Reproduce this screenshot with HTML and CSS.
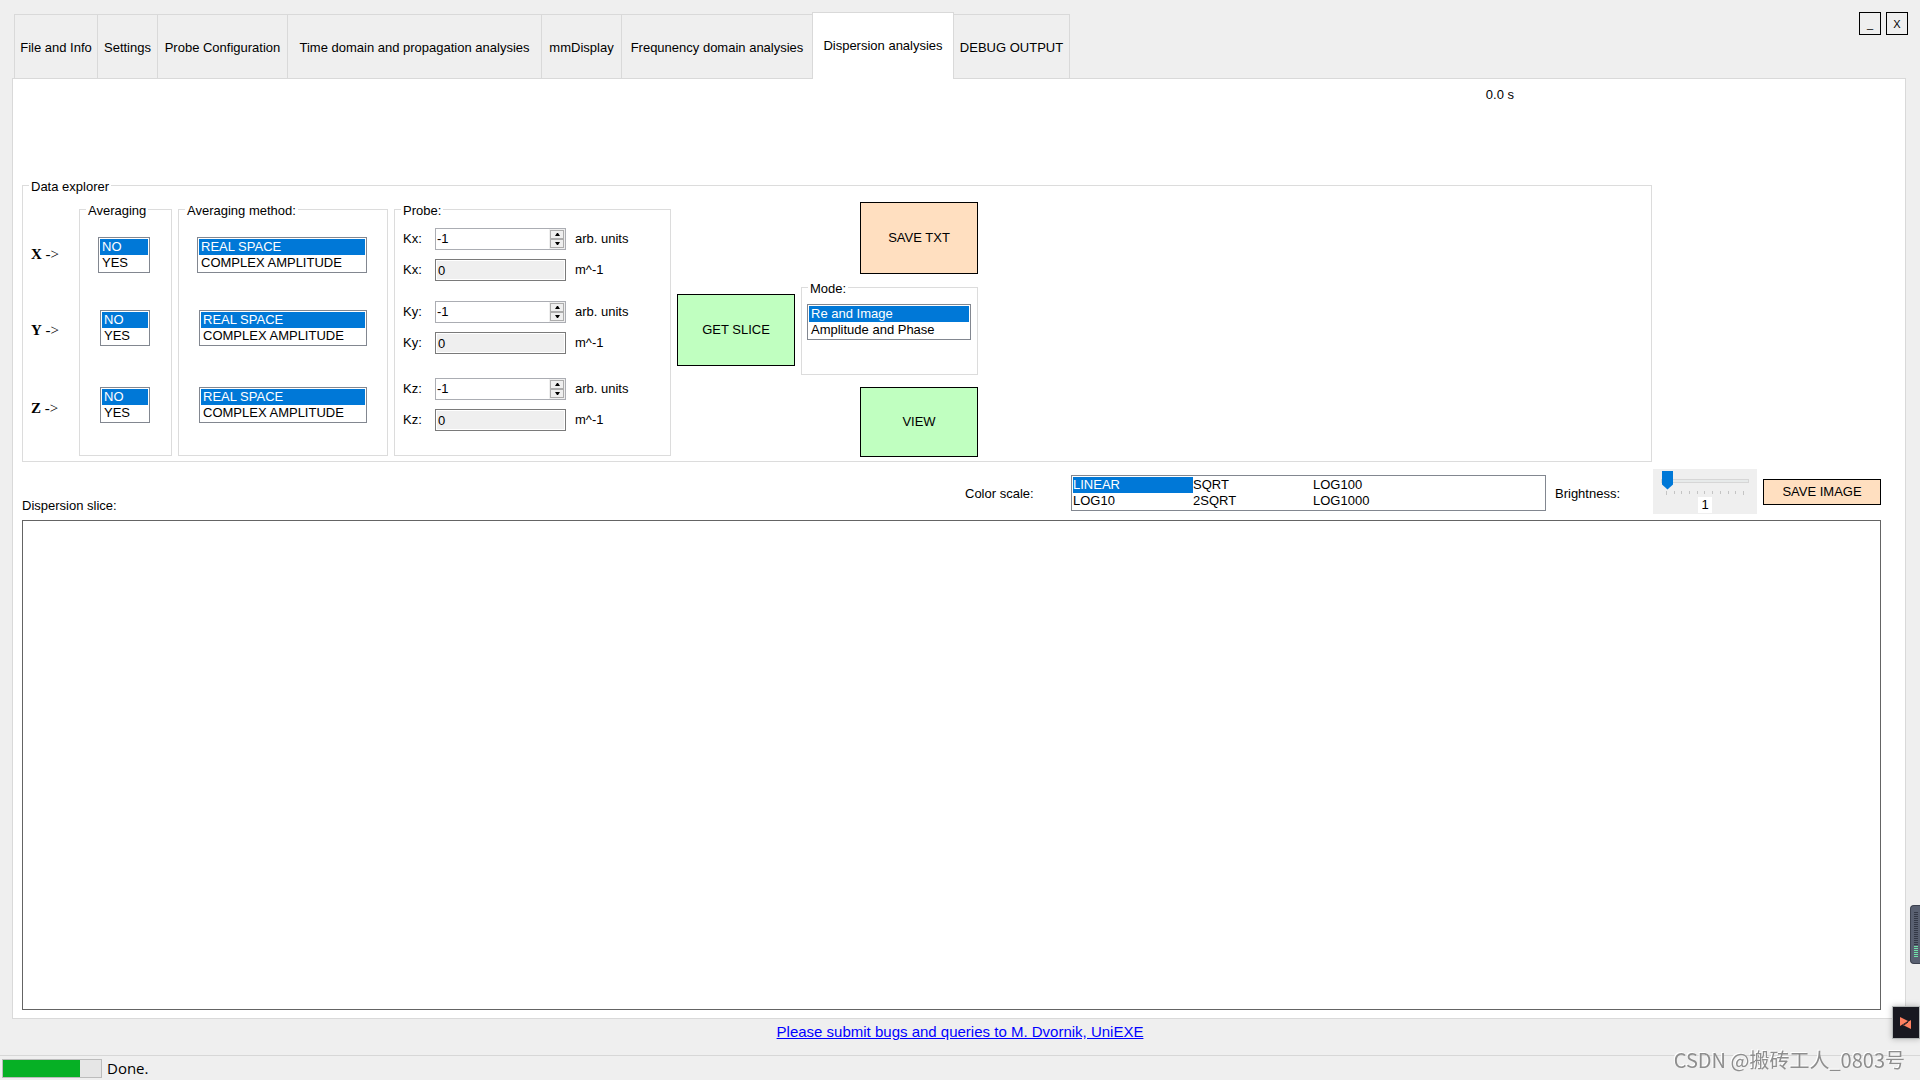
FILE: index.html
```html
<!DOCTYPE html>
<html lang="en">
<head>
<meta charset="utf-8">
<title>Dispersion analysies</title>
<link rel="stylesheet" href="styles.css">
</head>
<body>
<header class="topbar">
  <div class="tabs" role="tablist">
    <button class="tab" role="tab">File and Info</button>
    <button class="tab" role="tab">Settings</button>
    <button class="tab" role="tab">Probe Configuration</button>
    <button class="tab" role="tab">Time domain and propagation analysies</button>
    <button class="tab" role="tab">mmDisplay</button>
    <button class="tab" role="tab">Frequnency domain analysies</button>
    <button class="tab tab-active" role="tab" aria-selected="true">Dispersion analysies</button>
    <button class="tab tab-last" role="tab">DEBUG OUTPUT</button>
  </div>
  <div class="window-buttons">
    <button class="window-button">_</button>
    <button class="window-button">X</button>
  </div>
</header>

<main class="panel">
  <div class="timer">0.0 s</div>

  <fieldset class="group explorer">
    <legend>Data explorer</legend>
    <div class="explorer-row">
      <div class="axes rows">
        <div class="cell"><b>X</b>&nbsp;-&gt;</div>
        <div class="cell"><b>Y</b>&nbsp;-&gt;</div>
        <div class="cell"><b>Z</b>&nbsp;-&gt;</div>
      </div>

      <fieldset class="group averaging">
        <legend>Averaging</legend>
        <div class="rows">
          <div class="cell"><select class="list list-wide" size="2" aria-label="X averaging"><option selected>NO</option><option>YES</option></select></div>
          <div class="cell"><select class="list" size="2" aria-label="Y averaging"><option selected>NO</option><option>YES</option></select></div>
          <div class="cell"><select class="list" size="2" aria-label="Z averaging"><option selected>NO</option><option>YES</option></select></div>
        </div>
      </fieldset>

      <fieldset class="group method">
        <legend>Averaging method:</legend>
        <div class="rows">
          <div class="cell"><select class="list list-wide" size="2" aria-label="X averaging method"><option selected>REAL SPACE</option><option>COMPLEX AMPLITUDE</option></select></div>
          <div class="cell"><select class="list" size="2" aria-label="Y averaging method"><option selected>REAL SPACE</option><option>COMPLEX AMPLITUDE</option></select></div>
          <div class="cell"><select class="list" size="2" aria-label="Z averaging method"><option selected>REAL SPACE</option><option>COMPLEX AMPLITUDE</option></select></div>
        </div>
      </fieldset>

      <fieldset class="group probe">
        <legend>Probe:</legend>
        <div class="rows">
          <div class="pair">
            <label for="kx">Kx:</label>
            <div class="spinner"><input id="kx" class="spin-input" type="text" value="-1"><span class="spin-buttons"><button class="spin" aria-label="Increase Kx"><svg viewBox="0 0 5 3"><path d="M0 3h5L3 0H2z"/></svg></button><button class="spin" aria-label="Decrease Kx"><svg viewBox="0 0 5 3"><path d="M0 0h5L3 3H2z"/></svg></button></span></div>
            <span>arb. units</span>
            <label for="kxm">Kx:</label>
            <input id="kxm" class="readout" type="text" value="0" readonly>
            <span>m^-1</span>
          </div>
          <div class="pair">
            <label for="ky">Ky:</label>
            <div class="spinner"><input id="ky" class="spin-input" type="text" value="-1"><span class="spin-buttons"><button class="spin" aria-label="Increase Ky"><svg viewBox="0 0 5 3"><path d="M0 3h5L3 0H2z"/></svg></button><button class="spin" aria-label="Decrease Ky"><svg viewBox="0 0 5 3"><path d="M0 0h5L3 3H2z"/></svg></button></span></div>
            <span>arb. units</span>
            <label for="kym">Ky:</label>
            <input id="kym" class="readout" type="text" value="0" readonly>
            <span>m^-1</span>
          </div>
          <div class="pair">
            <label for="kz">Kz:</label>
            <div class="spinner"><input id="kz" class="spin-input" type="text" value="-1"><span class="spin-buttons"><button class="spin" aria-label="Increase Kz"><svg viewBox="0 0 5 3"><path d="M0 3h5L3 0H2z"/></svg></button><button class="spin" aria-label="Decrease Kz"><svg viewBox="0 0 5 3"><path d="M0 0h5L3 3H2z"/></svg></button></span></div>
            <span>arb. units</span>
            <label for="kzm">Kz:</label>
            <input id="kzm" class="readout" type="text" value="0" readonly>
            <span>m^-1</span>
          </div>
        </div>
      </fieldset>

      <button class="action green slice">GET SLICE</button>

      <div class="output">
        <button class="action peach">SAVE TXT</button>
        <fieldset class="group mode">
          <legend>Mode:</legend>
          <select class="list" size="2" aria-label="Mode"><option selected>Re and Image</option><option>Amplitude and Phase</option></select>
        </fieldset>
        <button class="action green view">VIEW</button>
      </div>
    </div>
  </fieldset>

  <div class="toolbar">
    <div class="slice-title">Dispersion slice:</div>
    <label class="scale-label" for="scale">Color scale:</label>
    <select id="scale" class="list scale" size="2"><option selected>LINEAR</option><option>SQRT</option><option>LOG100</option><option>LOG10</option><option>2SQRT</option><option>LOG1000</option></select>
    <label class="brightness-label" for="brightness">Brightness:</label>
    <div class="trackbar">
      <input id="brightness" class="slider" type="range" min="1" max="11" value="1">
      <div class="ticks"><i></i><i></i><i></i><i></i><i></i><i></i><i></i><i></i><i></i><i></i><i></i></div>
      <output class="slider-value" for="brightness">1</output>
    </div>
    <button class="action peach save-image">SAVE IMAGE</button>
  </div>

  <div class="canvas"></div>
</main>

<div class="contact"><a href="#contact">Please submit bugs and queries to M. Dvornik, UniEXE</a></div>

<footer class="statusbar">
  <progress class="progress" max="100" value="79" aria-label="Progress"></progress>
  <span>Done.</span>
</footer>

<div class="meter"><div class="meter-idle"></div><div class="meter-level"></div></div>
<div class="badge"><svg viewBox="0 0 12 12"><path fill="#ff8060" d="M0 0l8 4-8 5zM11 3v9L3 8z"/><path stroke="#181820" stroke-width="1" d="M4 8l4-3"/></svg></div>
<div class="watermark">CSDN @搬砖工人_0803号</div>
</body>
</html>
```
FILE: styles.css
```css
* { box-sizing: border-box; }

body {
  margin: 0;
  min-height: 100vh;
  display: flex;
  flex-direction: column;
  background: #efefef;
  color: #000;
  font: 13px/16px "Liberation Sans", Arial, sans-serif;
}

button, input, select, legend { font: inherit; color: inherit; }

/* tabs */
.topbar {
  display: flex;
  justify-content: space-between;
  align-items: flex-start;
  padding: 12px 12px 0 14px;
}
.tabs {
  display: grid;
  grid-template-columns: 83px 60px 130px 254px 80px 191px 142px 116px;
  align-items: end;
}
.tab {
  height: 64px;
  padding: 2px 0 0;
  border: 1px solid #d9d9d9;
  border-width: 1px 0 0 1px;
  background: #efefef;
  white-space: nowrap;
}
.tab-active {
  position: relative;
  height: 67px;
  margin-bottom: -1px;
  padding: 0;
  border-width: 1px 1px 0;
  background: #fff;
}
.tab-last { border-width: 1px 1px 0 0; }
.window-buttons { display: flex; gap: 5px; }
.window-button {
  width: 22px;
  height: 23px;
  padding: 0;
  border: 1px solid #000;
  background: #efefef;
  font-size: 11px;
}

/* page panel */
.panel {
  flex: 1;
  display: flex;
  flex-direction: column;
  margin: 0 14px 0 12px;
  padding: 7px 24px 8px 9px;
  border: 1px solid #d9d9d9;
  background: #fff;
}
.timer { padding-right: 367px; line-height: 18px; text-align: right; }

.group {
  min-width: 0;
  margin: 0;
  padding: 0;
  border: 1px solid #dcdcdc;
}
.group > legend { margin-left: 6px; padding: 3px 2px 0; line-height: 18px; }

.explorer { margin: 71px 229px 0 0; padding: 3px 8px 4px; }
.explorer > legend { margin-left: -2px; }
.explorer-row { display: flex; gap: 6px; align-items: flex-start; }

.rows { display: grid; grid-template-rows: 73px 77px 53px; }
.cell { display: flex; align-items: center; height: 53px; }

.axes {
  grid-template-rows: 76px 78px 53px;
  width: 42px;
  padding-top: 28px;
  font: 15px/18px "Liberation Serif", "Times New Roman", serif;
}
.averaging { width: 93px; padding: 8px 21px 24px 18px; }
.averaging > legend { margin-left: -12px; }
.method { width: 210px; padding: 8px 20px 24px 18px; }
.method > legend { margin-left: -12px; }
.probe { width: 277px; padding: 8px 8px 24px; }
.probe > legend { margin-left: -2px; }

.averaging .cell, .method .cell { justify-content: flex-end; }
.averaging .list { width: 50px; }
.averaging .list-wide { width: 52px; }
.method .list { width: 168px; }
.method .list-wide { width: 170px; }

/* list boxes */
.list {
  height: 36px;
  padding: 1px;
  border: 1px solid #828790;
  border-radius: 0;
  background: #fff;
  overflow: hidden;
  outline: 0;
}
.list option { height: 16px; min-height: 16px; padding: 0 2px; line-height: 16px; }
.list option:checked {
  background: linear-gradient(#0078d7, #0078d7);
  -webkit-text-fill-color: #fff;
}

/* probe fields */
.pair {
  display: grid;
  grid-template-columns: 32px 131px 1fr;
  grid-template-rows: 22px 22px;
  row-gap: 9px;
  height: 53px;
  align-items: center;
}
.pair > span { padding-left: 9px; }
.spinner { display: flex; height: 22px; border: 1px solid #abadb3; background: #fff; }
.spin-input { flex: 1; min-width: 0; padding: 0 1px; border: 0; background: #fff; outline: 0; }
.spin-buttons { display: flex; flex-direction: column; padding: 1px; background: #efefef; }
.spin {
  display: flex;
  align-items: center;
  justify-content: center;
  width: 14px;
  height: 9px;
  padding: 0;
  border: 1px solid #acacac;
  background: #efefef;
}
.spin svg { width: 5px; height: 3px; }
.readout {
  width: 131px;
  height: 22px;
  padding: 0 2px;
  border: 1px solid #7a7a7a;
  border-radius: 0;
  box-shadow: inset 0 0 0 1px #fff;
  background: #efefef;
  outline: 0;
}

/* push buttons */
.action {
  flex: none;
  width: 118px;
  height: 72px;
  padding: 0;
  border: 1px solid #000;
}
.green { background: #c0ffc0; }
.peach { background: #ffdfc0; }
.slice { margin-top: 95px; }
.view { height: 70px; margin-top: 12px; }

.output { display: flex; flex-direction: column; align-items: flex-end; padding-top: 3px; }
.mode { width: 177px; height: 98px; margin-top: 3px; padding: 6px 5px 0; }
.mode > legend { margin-left: 1px; }
.mode .list { display: block; width: 164px; }

/* slice toolbar */
.toolbar { display: flex; align-items: center; height: 45px; margin-top: 7px; }
.slice-title { align-self: flex-end; margin-right: auto; }
.scale-label { width: 106px; padding-top: 4px; }
.scale { width: 475px; margin-top: 3px; padding: 1px 111px 1px 1px; white-space: normal; }
.scale option { float: left; width: 120px; padding: 0; }
.brightness-label { width: 107px; padding: 4px 0 0 9px; }
.trackbar { width: 104px; height: 45px; padding: 2px 8px 0; background: #efefef; }
.slider {
  display: block;
  width: 88px;
  height: 19px;
  margin: 0;
  appearance: none;
  background: none;
}
.slider::-webkit-slider-runnable-track {
  height: 4px;
  border: 1px solid #d6d6d6;
  background: #e7eaea;
}
.slider::-webkit-slider-thumb {
  appearance: none;
  width: 11px;
  height: 19px;
  margin-top: -9px;
  background: #0078d7;
  clip-path: polygon(0 0, 100% 0, 100% 74%, 50% 100%, 0 74%);
}
.ticks { display: flex; justify-content: space-between; width: 78px; height: 4px; margin: 1px 0 0 5px; }
.ticks i { width: 1px; height: 3px; background: #c4c4c4; }
.ticks i:first-child, .ticks i:last-child { height: 4px; }
.slider-value { display: block; width: 14px; margin: 2px auto 0; background: #fff; text-align: center; }
.save-image { height: 26px; margin-left: 6px; }

.canvas { flex: 1; min-height: 200px; margin-top: 6px; border: 1px solid #646464; background: #fff; }

/* footer */
.contact { height: 36px; padding-top: 4px; text-align: center; font-size: 15px; line-height: 18px; }
.contact a { color: #00f; }
.statusbar {
  display: flex;
  align-items: center;
  gap: 5px;
  height: 25px;
  padding-left: 2px;
  border-top: 1px solid #d7d7d7;
  font: 15px/20px "Open Sans", sans-serif;
}
.progress { appearance: none; width: 100px; height: 19px; border: 1px solid #bcbcbc; background: #e6e6e6; }
.progress::-webkit-progress-bar { background: #e6e6e6; }
.progress::-webkit-progress-value { background: #06b025; }

/* desktop overlays */
.meter {
  position: fixed;
  right: 0;
  bottom: 116px;
  width: 10px;
  height: 59px;
  padding: 6px 2px 0 3px;
  border: 1px solid #3c414f;
  border-right: 0;
  border-radius: 4px 0 0 4px;
  background: #596071;
}
.meter-idle { width: 4px; height: 33px; background: repeating-linear-gradient(#333846 0 1px, #596071 1px 2px); }
.meter-level { width: 4px; height: 12px; margin-top: 1px; background: repeating-linear-gradient(#6fe3a8 0 1px, #596071 1px 2px); }
.badge {
  position: fixed;
  right: 0;
  bottom: 41px;
  display: flex;
  align-items: center;
  justify-content: center;
  width: 28px;
  height: 33px;
  border: 1px solid #b4b8b8;
  background: #181820;
  box-shadow: 0 0 6px rgba(0, 0, 0, .25);
}
.badge svg { width: 12px; height: 12px; }
.watermark {
  position: fixed;
  right: 15px;
  bottom: 6px;
  color: #8e8e8e;
  font: 400 20px/28px "Noto Sans CJK SC", sans-serif;
  text-shadow: -1px -1px 0 #fff;
  pointer-events: none;
}
```
